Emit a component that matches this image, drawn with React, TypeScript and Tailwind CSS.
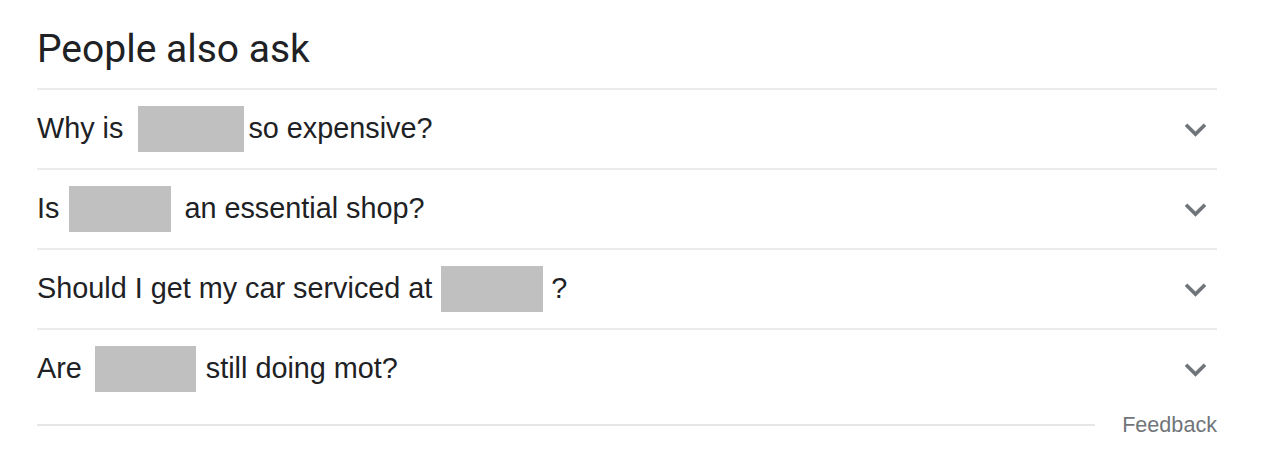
import React from "react";

const Chevron = () => (
  <svg width="43" height="43" viewBox="0 0 24 24" className="shrink-0">
    <path d="M16.59 8.59L12 13.17 7.41 8.59 6 10l6 6 6-6z" fill="#70757a" />
  </svg>
);

const Row = ({ children }: { children: React.ReactNode }) => (
  <div className="flex h-[80px] items-center justify-between border-t-2 border-[#ebebeb]">
    <div className="flex items-center whitespace-pre text-[28.8px] text-[#202124]" style={{ fontFamily: '"Liberation Sans", Arial, sans-serif' }}>
      {children}
    </div>
    <Chevron />
  </div>
);

export default function App() {
  return (
    <div className="min-h-[471px] bg-white">
      <div className="ml-[37px] w-[1180px]">
        <h2
          className="pt-[29px] pb-[19px] text-[39px] leading-[40px] text-[#202124]"
          style={{ fontFamily: 'Roboto, "Open Sans", sans-serif' }}
        >
          People also ask
        </h2>
        <Row>
          <span>Why is</span>
          <span className="inline-block h-[46px] w-[106px] bg-[#c0c0c0] ml-[15px]" />
          <span className="ml-[4px]">so expensive?</span>
        </Row>
        <Row>
          <span>Is</span>
          <span className="inline-block h-[46px] w-[102px] bg-[#c0c0c0] ml-[10px]" />
          <span className="ml-[13px]">an essential shop?</span>
        </Row>
        <Row>
          <span>Should I get my car serviced at</span>
          <span className="inline-block h-[46px] w-[102px] bg-[#c0c0c0] ml-[9px]" />
          <span className="ml-[8px]">?</span>
        </Row>
        <Row>
          <span>Are</span>
          <span className="inline-block h-[46px] w-[101px] bg-[#c0c0c0] ml-[13px]" />
          <span className="ml-[10px]">still doing mot?</span>
        </Row>
        <div className="flex h-[32px] items-center pt-[1px]">
          <div className="h-[2px] flex-1 bg-[#e6e6e6]" />
          <span
            className="ml-[27px] text-[21.6px] leading-[24px] text-[#70757a]"
            style={{ fontFamily: '"Liberation Sans", Arial, sans-serif' }}
          >
            Feedback
          </span>
        </div>
      </div>
    </div>
  );
}
